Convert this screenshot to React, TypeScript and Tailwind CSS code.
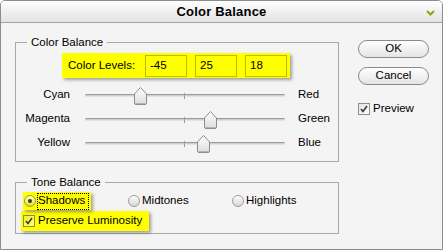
const Chevron = () => (
  <svg width="9" height="6" viewBox="0 0 9 6" className="absolute right-[7px] top-[9px]">
    <polyline points="1,1 4.5,4.5 8,1" fill="none" stroke="#93a313" strokeWidth="2" />
  </svg>
);

const Thumb = () => (
  <svg width="13" height="18" viewBox="0 0 13 18">
    <defs>
      <linearGradient id="thumbFill" x1="0" y1="0" x2="0" y2="1">
        <stop offset="0" stopColor="#ffffff" />
        <stop offset="1" stopColor="#dcdcdc" />
      </linearGradient>
    </defs>
    <path
      d="M6.5 0.5 L12.5 7 L12.5 16 Q12.5 17.5 11 17.5 L2 17.5 Q0.5 17.5 0.5 16 L0.5 7 Z"
      fill="url(#thumbFill)"
      stroke="#8c8c8c"
    />
    <line x1="1.5" y1="16.5" x2="11.5" y2="16.5" stroke="#b4b4b4" />
  </svg>
);

const Slider = ({ value }: { value: number }) => {
  const left = ((value + 100) / 200) * 200 - 6.5;
  return (
    <div className="relative w-[200px] h-[24px]">
      <div className="absolute top-[11px] left-0 w-full h-[3px] rounded-full border-t border-[#9c9c9c] bg-gradient-to-b from-[#c4c4c4] to-[#ececec]" />
      <div className="absolute top-[10px] left-[99px] w-px h-[6px] bg-[#a0a0a0]" />
      <div className="absolute top-[4px]" style={{ left }}>
        <Thumb />
      </div>
    </div>
  );
};

const Radio = ({ checked = false, tint = false }: { checked?: boolean; tint?: boolean }) => (
  <span
    className={
      tint
        ? 'w-[12px] h-[12px] rounded-full border border-[#9a9a3a] bg-gradient-to-b from-[#ffffc8] to-[#e0e000] flex items-center justify-center shrink-0'
        : 'w-[12px] h-[12px] rounded-full border border-[#9c9c9c] bg-gradient-to-b from-white to-[#d6d6d6] flex items-center justify-center shrink-0'
    }
  >
    {checked && <span className="w-[4px] h-[4px] rounded-full bg-[#3c3c14]" />}
  </span>
);

const Checkbox = ({ tint = false }: { tint?: boolean }) => (
  <span
    className={
      tint
        ? 'w-[12px] h-[12px] border border-[#8f8f2a] bg-gradient-to-br from-[#f0f000] to-[#ffff90] flex items-center justify-center shrink-0'
        : 'w-[12px] h-[12px] border border-[#8e8e8e] bg-gradient-to-br from-[#e2e2e2] to-white flex items-center justify-center shrink-0'
    }
  >
    <svg width="8" height="8" viewBox="0 0 8 8">
      <polyline points="1,4 3,6.5 7,1" fill="none" stroke={tint ? '#404010' : '#3a3a3a'} strokeWidth="1.6" />
    </svg>
  </span>
);

const sliders = [
  { left: 'Cyan', right: 'Red', value: -45 },
  { left: 'Magenta', right: 'Green', value: 25 },
  { left: 'Yellow', right: 'Blue', value: 18 },
];

const PillButton = ({ label, className = '' }: { label: string; className?: string }) => (
  <button
    type="button"
    className={`w-[71px] h-[18px] rounded-full border border-[#8a8a8a] bg-gradient-to-b from-white to-[#e4e4e4] flex items-center justify-center ${className}`}
  >
    {label}
  </button>
);

export default function App() {
  return (
    <div className="w-[443px] h-[250px] bg-white font-['Liberation_Sans',Arial,sans-serif] text-[11.5px] text-black leading-none">
      <div className="w-full h-full flex flex-col border border-[#8c8c8c] rounded-t-[5px] bg-[#f4f4f4] overflow-hidden">
        {/* title bar */}
        <div className="relative h-[22px] shrink-0 border-b border-[#a3a3a3] bg-gradient-to-b from-white to-[#e2e2e2] flex items-center justify-center">
          <span className="font-bold text-[13px] tracking-[0.2px]">Color Balance</span>
          <Chevron />
        </div>

        <div className="flex">
          <div className="ml-[14px] mt-[19px] w-[324px]">
            {/* Color Balance group */}
            <div className="relative h-[120px] border border-[#a9a9a9]">
              <span className="absolute -top-[6px] left-[11px] px-[4px] bg-[#f4f4f4]">Color Balance</span>

              <div className="ml-[46px] mt-[10px] w-[228px] h-[25px] bg-[#ffff00] shadow-[2px_2px_3px_rgba(0,0,0,0.35)] flex items-center pl-[6px]">
                <span className="w-[77px]">Color Levels:</span>
                <div className="flex gap-[8px]">
                  {['-45', '25', '18'].map((v) => (
                    <div key={v} className="w-[42px] h-[22px] border border-[#bcbc00] bg-[#ffff00] flex items-center pl-[4px]">
                      {v}
                    </div>
                  ))}
                </div>
              </div>

              <div className="mt-[5px] flex flex-col">
                {sliders.map((s) => (
                  <div key={s.left} className="h-[24px] flex items-center">
                    <span className="w-[54px] text-right">{s.left}</span>
                    <div className="ml-[15px]">
                      <Slider value={s.value} />
                    </div>
                    <span className="ml-[13px]">{s.right}</span>
                  </div>
                ))}
              </div>
            </div>

            {/* Tone Balance group */}
            <div className="relative mt-[20px] border border-[#a9a9a9] pt-[9px] pb-[2px]">
              <span className="absolute -top-[6px] left-[11px] px-[4px] bg-[#f4f4f4]">Tone Balance</span>

              <div className="flex items-center h-[18px]">
                <div className="ml-[7px] w-[68px] h-[18px] bg-[#ffff00] shadow-[2px_2px_3px_rgba(0,0,0,0.35)] flex items-center pl-[1px]">
                  <Radio checked tint />
                  <span className="ml-[1px] h-[17px] flex items-center px-[1px] outline-1 outline-dotted outline-black -outline-offset-1 w-[52px]">
                    Shadows
                  </span>
                </div>
                <div className="ml-[37px] w-[104px] flex items-center">
                  <Radio />
                  <span className="ml-[2px]">Midtones</span>
                </div>
                <div className="flex items-center">
                  <Radio />
                  <span className="ml-[2px]">Highlights</span>
                </div>
              </div>

              <div className="mt-[1px] ml-[5px] w-[128px] h-[20px] bg-[#ffff00] shadow-[2px_2px_3px_rgba(0,0,0,0.35)] flex items-center pl-[2px]">
                <Checkbox tint />
                <span className="ml-[3px]">Preserve Luminosity</span>
              </div>
            </div>
          </div>

          {/* buttons */}
          <div className="ml-[19px] mt-[17px] flex flex-col">
            <PillButton label="OK" />
            <PillButton label="Cancel" className="mt-[9px]" />
            <div className="mt-[18px] flex items-center">
              <Checkbox />
              <span className="ml-[3px]">Preview</span>
            </div>
          </div>
        </div>
      </div>
    </div>
  );
}
